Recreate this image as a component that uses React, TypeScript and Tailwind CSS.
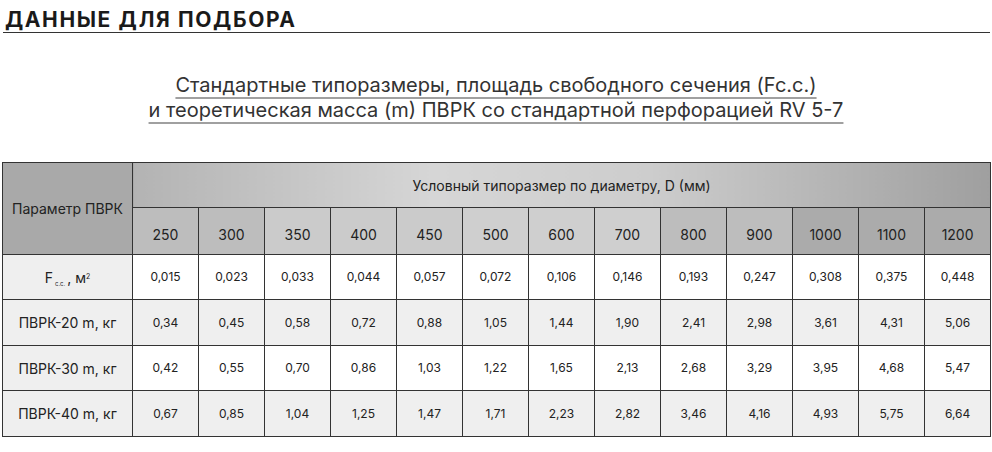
import React from 'react';

const sizes = ['250', '300', '350', '400', '450', '500', '600', '700', '800', '900', '1000', '1100', '1200'];

const rows: { label: React.ReactNode; values: string[]; shaded: boolean; h: string }[] = [
  {
    label: (
      <span>
        F<sub className="text-[6px] align-[-2px] mx-[2px]">c.c.</sub>, м<sup className="text-[7px]">2</sup>
      </span>
    ),
    values: ['0,015', '0,023', '0,033', '0,044', '0,057', '0,072', '0,106', '0,146', '0,193', '0,247', '0,308', '0,375', '0,448'],
    shaded: false,
    h: 'h-[45px]',
  },
  {
    label: 'ПВРК-20 m, кг',
    values: ['0,34', '0,45', '0,58', '0,72', '0,88', '1,05', '1,44', '1,90', '2,41', '2,98', '3,61', '4,31', '5,06'],
    shaded: true,
    h: 'h-[46px]',
  },
  {
    label: 'ПВРК-30 m, кг',
    values: ['0,42', '0,55', '0,70', '0,86', '1,03', '1,22', '1,65', '2,13', '2,68', '3,29', '3,95', '4,68', '5,47'],
    shaded: false,
    h: 'h-[45px]',
  },
  {
    label: 'ПВРК-40 m, кг',
    values: ['0,67', '0,85', '1,04', '1,25', '1,47', '1,71', '2,23', '2,82', '3,46', '4,16', '4,93', '5,75', '6,64'],
    shaded: true,
    h: 'h-[46px]',
  },
];

const App: React.FC = () => {
  return (
    <div className="w-[992px] h-[452px] bg-white font-['Inter','Noto_Sans',sans-serif] text-[#222] overflow-hidden">
      {/* Section heading */}
      <div className="ml-[3px] mr-[2px] pt-[8px] border-b-[1.5px] border-[#333]">
        <h1 className="text-[21px] leading-[24px] font-bold tracking-[1.6px] text-[#1a1a1a] pl-[2px]">
          ДАННЫЕ ДЛЯ ПОДБОРА
        </h1>
      </div>

      {/* Table caption */}
      <div className="mt-[40px] text-center text-[20px] leading-[25px] text-[#333]">
        <p>
          <span className="underline decoration-[#a0a0a0] decoration-[1.5px] underline-offset-[5px]">
            Стандартные типоразмеры, площадь свободного сечения (Fc.c.)
          </span>
        </p>
        <p>
          <span className="underline decoration-[#a0a0a0] decoration-[1.5px] underline-offset-[5px]">
            и теоретическая масса (m) ПВРК со стандартной перфорацией RV 5-7
          </span>
        </p>
      </div>

      {/* Data table */}
      <div className="mt-[39px] px-[2px]">
        <table className="w-[988px] table-fixed border-collapse border-[1.5px] border-[#333] text-center text-[#222]">
          <colgroup>
            <col className="w-[130px]" />
            {sizes.map((s) => (
              <col key={s} className="w-[66px]" />
            ))}
          </colgroup>
          <thead>
            <tr className="h-[45px]">
              <th rowSpan={2} className="border border-[#333] bg-[#a9a9a9] font-normal text-[14px]">
                Параметр ПВРК
              </th>
              <th
                colSpan={13}
                className="border border-[#333] font-normal text-[14px] bg-[linear-gradient(to_right,#b3b3b3,#d6d6d6_35%,#cdcdcd_60%,#9f9f9f)]"
              >
                Условный типоразмер по диаметру, D (мм)
              </th>
            </tr>
            <tr className="h-[47px]">
              {sizes.map((s, i) => (
                <th
                  key={s}
                  className={`border border-[#333] font-normal text-[14px] pt-[6px] ${
                    i < 2
                      ? 'bg-[#bdbdbd]'
                      : i < 5
                      ? 'bg-[#cbcbcb]'
                      : i < 8
                      ? 'bg-[#cfcfcf]'
                      : i < 10
                      ? 'bg-[#bdbdbd]'
                      : 'bg-[#ababab]'
                  }`}
                >
                  {s}
                </th>
              ))}
            </tr>
          </thead>
          <tbody>
            {rows.map((r, idx) => (
              <tr key={idx} className={r.h}>
                <td className="border border-[#333] bg-[#efefef] text-[14px]">{r.label}</td>
                {r.values.map((v, i) => (
                  <td
                    key={i}
                    className={`border border-[#333] text-[12px] ${r.shaded ? 'bg-[#efefef]' : 'bg-white'}`}
                  >
                    {v}
                  </td>
                ))}
              </tr>
            ))}
          </tbody>
        </table>
      </div>
    </div>
  );
};

export default App;
